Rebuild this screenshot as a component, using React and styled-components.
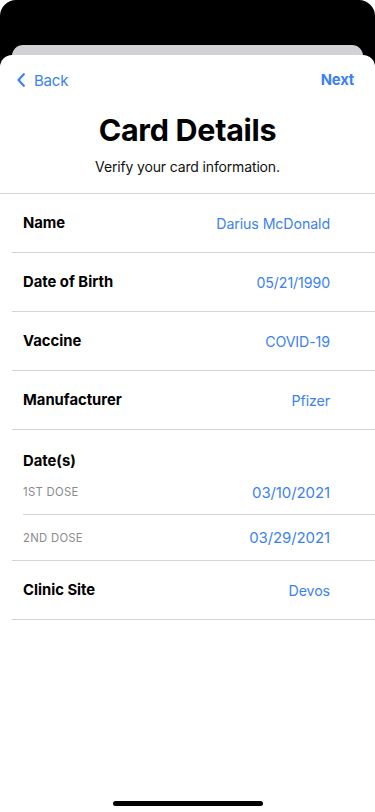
import styled, { createGlobalStyle } from "styled-components";

const GlobalStyle = createGlobalStyle`
  * { box-sizing: border-box; }
  body {
    margin: 0;
    background: #ffffff;
    font-family: Inter, "Noto Sans", "Liberation Sans", sans-serif;
    -webkit-font-smoothing: antialiased;
  }
`;

const Screen = styled.div`
  display: flex;
  flex-direction: column;
  height: 812px;
  background: #000;
  border-radius: 16px 16px 0 0;
  padding-top: 45px;
  overflow: hidden;
`;

const BackSheet = styled.div`
  height: 20px;
  margin: 0 12px -10px;
  background: #d1d1d6;
  border-radius: 11px 11px 0 0;
`;

const Sheet = styled.div`
  position: relative;
  flex: 1;
  display: flex;
  flex-direction: column;
  background: #fff;
  border-radius: 12px 12px 0 0;
`;

const Nav = styled.nav`
  display: flex;
  justify-content: space-between;
  align-items: center;
  height: 22px;
  margin-top: 14px;
  padding: 0 21px 0 17px;
`;

const NavButton = styled.button`
  display: flex;
  align-items: center;
  gap: 9px;
  padding: 0;
  border: none;
  background: none;
  color: #3b82f0;
  font-family: inherit;
  font-size: ${(p) => (p.$bold ? "14.8px" : "15px")};
  font-weight: ${(p) => (p.$bold ? 700 : 400)};
  letter-spacing: -0.2px;
  cursor: pointer;
`;

const Title = styled.h1`
  margin: 22px 0 0;
  text-align: center;
  font-size: 30.5px;
  line-height: 34px;
  font-weight: 700;
  letter-spacing: -0.3px;
  color: #000;
`;

const Subtitle = styled.p`
  margin: 10px 0 0;
  text-align: center;
  font-size: 14px;
  line-height: 20px;
  letter-spacing: -0.15px;
  color: #111;
`;

const List = styled.ul`
  list-style: none;
  margin: 16px 0 0;
  padding: 0;
  border-top: 1px solid #d4d4d8;
`;

const Row = styled.li`
  display: flex;
  justify-content: space-between;
  align-items: center;
  height: 59px;
  margin-left: 12px;
  padding: 0 45px 0 11px;
  border-bottom: 1px solid #d4d4d8;
`;

const Group = styled.li`
  margin-left: 12px;
  border-bottom: 1px solid #d4d4d8;
`;

const GroupHead = styled.div`
  padding: 20px 0 0 11px;
  height: 40px;
`;

const SubRow = styled.div`
  display: flex;
  justify-content: space-between;
  align-items: center;
  height: 45px;
  margin-left: 11px;
  padding-right: 45px;
  border-bottom: ${(p) => (p.$last ? "none" : "1px solid #d4d4d8")};
`;

const Label = styled.span`
  font-size: 14.8px;
  line-height: 20px;
  font-weight: 700;
  color: #000;
`;

const SubLabel = styled.span`
  font-size: 11.3px;
  letter-spacing: 0.3px;
  text-transform: uppercase;
  color: #8a8a8e;
`;

const Value = styled.span`
  font-size: ${(p) => (p.$large ? "15px" : "14.2px")};
  letter-spacing: -0.1px;
  color: #3b82f0;
`;

const HomeIndicator = styled.div`
  width: 150px;
  height: 5px;
  margin: auto auto 6px;
  border-radius: 3px;
  background: #000;
`;

const rows = [
  { label: "Name", value: "Darius McDonald" },
  { label: "Date of Birth", value: "05/21/1990" },
  { label: "Vaccine", value: "COVID-19" },
  { label: "Manufacturer", value: "Pfizer" },
];

const doses = [
  { label: "1st Dose", value: "03/10/2021" },
  { label: "2nd Dose", value: "03/29/2021" },
];

export default function App() {
  return (
    <>
      <GlobalStyle />
      <Screen>
        <BackSheet />
        <Sheet>
          <Nav>
            <NavButton>
              <svg width="8" height="14" viewBox="0 0 8 14" fill="none">
                <path d="M6.8 1.2L1.5 7l5.3 5.8" stroke="#3b82f0" strokeWidth="2.2" strokeLinecap="round" strokeLinejoin="round" />
              </svg>
              Back
            </NavButton>
            <NavButton $bold>Next</NavButton>
          </Nav>
          <Title>Card Details</Title>
          <Subtitle>Verify your card information.</Subtitle>
          <List>
            {rows.map((r) => (
              <Row key={r.label}>
                <Label>{r.label}</Label>
                <Value>{r.value}</Value>
              </Row>
            ))}
            <Group>
              <GroupHead>
                <Label>Date(s)</Label>
              </GroupHead>
              {doses.map((d, i) => (
                <SubRow key={d.label} $last={i === doses.length - 1}>
                  <SubLabel>{d.label}</SubLabel>
                  <Value $large>{d.value}</Value>
                </SubRow>
              ))}
            </Group>
            <Row>
              <Label>Clinic Site</Label>
              <Value>Devos</Value>
            </Row>
          </List>
          <HomeIndicator />
        </Sheet>
      </Screen>
    </>
  );
}
